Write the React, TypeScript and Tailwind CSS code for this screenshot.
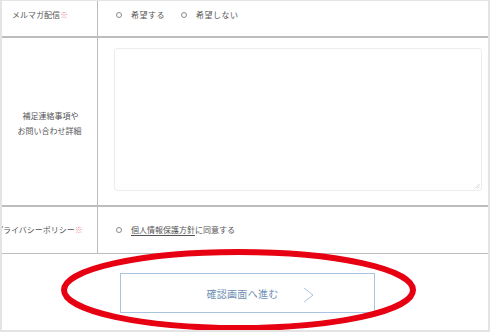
import React from "react";

const font = { fontFamily: '"Noto Sans CJK JP", "Noto Sans", sans-serif' };

const Radio = () => (
    <span className="inline-block w-[6px] h-[6px] rounded-full border border-[#8a8a8a] bg-white" />
);

export default function App() {
    return (
        <div
            className="relative w-[490px] h-[332px] bg-white overflow-hidden border-l-2 border-r-2 border-t border-b-2 border-[#e4e4e4] text-[#444]"
            style={font}
        >
            <div className="grid grid-cols-[96px_1fr]">
                {/* row 1 */}
                <div className="h-[37px] border-r-[1.5px] border-b-2 border-[#bdbdbd] pl-[10px] pt-[8px] text-[8px] leading-[12px] text-[#555] whitespace-nowrap">
                    メルマガ配信<span className="text-[#eb8a90]">※</span>
                </div>
                <div className="h-[37px] border-b-2 border-[#bdbdbd] pl-[18px] pt-[8px] flex items-start gap-[8px] text-[8px] leading-[12px] text-[#555]">
                    <label className="flex items-center gap-[9px]">
                        <Radio />
                        <span className="tracking-[0.5px]">希望する</span>
                    </label>
                    <label className="flex items-center gap-[9px] ml-[8px]">
                        <Radio />
                        <span className="tracking-[0.5px]">希望しない</span>
                    </label>
                </div>

                {/* row 2 */}
                <div className="h-[169px] border-r-[1.5px] border-b-2 border-[#bdbdbd] flex flex-col items-center justify-center text-[8px] leading-[15px] text-[#555] pt-[3px]">
                    <span className="pl-[2px]">補足連絡事項や</span>
                    <span>お問い合わせ詳細</span>
                </div>
                <div className="h-[169px] border-b-2 border-[#bdbdbd] pl-[16px] pr-[6px] pt-[10px] pb-[14px]">
                    <div className="relative w-full h-full">
                        <textarea className="block w-full h-full border border-[#ececec] rounded-[3px] bg-white resize-none" />
                        <svg className="absolute right-[2px] bottom-[2px]" width="6" height="6" viewBox="0 0 6 6">
                            <path d="M5.5 1 L1 5.5 M5.5 3.5 L3.5 5.5" stroke="#c8c8c8" strokeWidth="0.8" />
                        </svg>
                    </div>
                </div>

                {/* row 3 */}
                <div className="h-[47px] border-r-[1.5px] border-b-[1.5px] border-[#bdbdbd] flex items-center overflow-hidden text-[8px] text-[#555] whitespace-nowrap">
                    <span className="-ml-[7px]">
                        プライバシーポリシー<span className="text-[#eb8a90]">※</span>
                    </span>
                </div>
                <div className="h-[47px] border-b-[1.5px] border-[#bdbdbd] pl-[18px] flex items-center gap-[9px] text-[8px] text-[#555]">
                    <Radio />
                    <span>
                        <span className="underline underline-offset-2">個人情報保護方針</span>に同意する
                    </span>
                </div>
            </div>

            {/* submit */}
            <div className="flex justify-center pt-[19px] pl-[5px]">
                <button className="relative w-[255px] h-[40px] border-[1.5px] border-[#a9c4e0] bg-white text-[10px] text-[#6f8fb2] tracking-[0.3px]">
                    <span className="pr-[10px]">確認画面へ進む</span>
                    <svg
                        className="absolute left-[182px] top-[13px]"
                        width="11"
                        height="16"
                        viewBox="0 0 11 16"
                    >
                        <path d="M1 1 L10 8 L1 15" fill="none" stroke="#a9c4e0" strokeWidth="1" />
                    </svg>
                </button>
            </div>

            {/* annotation */}
            <svg className="absolute left-0 top-0 pointer-events-none" width="490" height="332">
                <ellipse cx="236.5" cy="289" rx="174.5" ry="38" fill="none" stroke="#e60012" strokeWidth="6" />
            </svg>
        </div>
    );
}
